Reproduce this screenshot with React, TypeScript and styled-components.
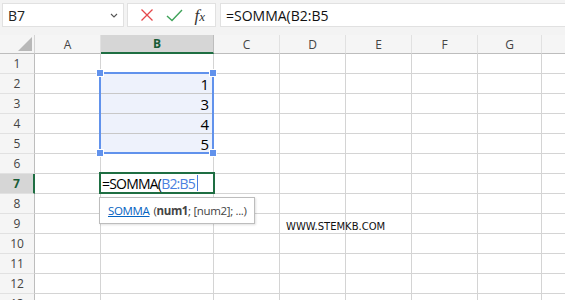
import styled, { createGlobalStyle } from 'styled-components'

const GlobalStyle = createGlobalStyle`
  html, body {
    margin: 0;
    padding: 0;
    background: #ffffff;
    font-family: "Open Sans", "Noto Sans", sans-serif;
  }
`

const COLS = ['A', 'B', 'C', 'D', 'E', 'F', 'G', 'H']
const WIDTHS = [66, 113, 66, 66, 66, 66, 64, 90]
const ROWS = 13

const cellValues: Record<string, string> = {
  B2: '1',
  B3: '3',
  B4: '4',
  B5: '5',
}

const Page = styled.div`
  width: 565px;
  height: 300px;
  overflow: hidden;
  background: #f3f3f3;
`

const Toolbar = styled.div`
  display: flex;
  align-items: flex-start;
  gap: 3px;
  height: 35px;
  padding: 3px 0 0 2px;
  box-sizing: border-box;
`

const NameBox = styled.div`
  display: flex;
  align-items: center;
  justify-content: space-between;
  width: 122px;
  height: 24px;
  box-sizing: border-box;
  padding: 0 5px 0 5px;
  background: #fff;
  border: 1px solid #e1e1e1;
  font-size: 14px;
  color: #222;
`

const ButtonBox = styled.div`
  display: flex;
  align-items: center;
  justify-content: space-around;
  width: 89px;
  height: 24px;
  box-sizing: border-box;
  padding: 0 4px 0 6px;
  background: #fff;
  border: 1px solid #e1e1e1;
`

const FxLabel = styled.span`
  font-family: "Liberation Serif", serif;
  font-style: italic;
  font-size: 17px;
  color: #333;
  line-height: 1;
`

const FxSub = styled.span`
  font-size: 13px;
`

const FormulaInput = styled.div`
  flex: 1;
  height: 24px;
  box-sizing: border-box;
  margin-left: 1px;
  padding: 0 5px;
  display: flex;
  align-items: center;
  background: #fff;
  border: 1px solid #e1e1e1;
  border-right: none;
  font-size: 14px;
  color: #111;
`

const Sheet = styled.div`
  position: relative;
  background: #fff;
  overflow: hidden;
  height: 265px;
`

const Row = styled.div`
  display: flex;
`

const Corner = styled.div`
  width: 35px;
  flex-shrink: 0;
  height: 19px;
  box-sizing: border-box;
  background: #f5f5f5;
  border-right: 1px solid #d4d4d4;
  border-bottom: 1px solid #bdbdbd;
  position: relative;
  &::after {
    content: '';
    position: absolute;
    right: 2px;
    bottom: 2px;
    border-left: 14px solid transparent;
    border-bottom: 14px solid #b8b8b8;
  }
`

const ColHeader = styled.div<{ $w: number; $active?: boolean }>`
  width: ${(p) => p.$w}px;
  flex-shrink: 0;
  height: 19px;
  box-sizing: border-box;
  display: flex;
  align-items: center;
  justify-content: center;
  font-size: 12px;
  background: ${(p) => (p.$active ? '#d6d6d6' : '#f5f5f5')};
  color: ${(p) => (p.$active ? '#185c37' : '#444')};
  font-weight: ${(p) => (p.$active ? 700 : 400)};
  border-right: 1px solid ${(p) => (p.$active ? '#bdbdbd' : '#e1e1e1')};
  border-bottom: ${(p) => (p.$active ? '2px solid #1e6e42' : '1px solid #bdbdbd')};
`

const RowHeader = styled.div<{ $active?: boolean }>`
  width: 35px;
  flex-shrink: 0;
  height: 20px;
  box-sizing: border-box;
  display: flex;
  align-items: center;
  justify-content: center;
  font-size: 12px;
  background: ${(p) => (p.$active ? '#d6d6d6' : '#f5f5f5')};
  color: ${(p) => (p.$active ? '#185c37' : '#444')};
  font-weight: ${(p) => (p.$active ? 700 : 400)};
  border-right: ${(p) => (p.$active ? '2px solid #1e6e42' : '1px solid #bdbdbd')};
  border-bottom: 1px solid #e1e1e1;
`

const Cell = styled.div<{ $w: number; $sel?: boolean }>`
  width: ${(p) => p.$w}px;
  flex-shrink: 0;
  height: 20px;
  box-sizing: border-box;
  padding: 0 4px;
  display: flex;
  align-items: center;
  justify-content: flex-end;
  background: ${(p) => (p.$sel ? '#eef2fc' : '#fff')};
  border-right: 1px solid #d4d4d4;
  border-bottom: 1px solid ${(p) => (p.$sel ? '#c8c8c8' : '#d4d4d4')};
  font-size: 15px;
  color: #000;
  white-space: nowrap;
`

const Range = styled.div`
  position: absolute;
  left: 99px;
  top: 37px;
  width: 115px;
  height: 82px;
  box-sizing: border-box;
  border: 2px solid #6192ec;
  pointer-events: none;
`

const Handle = styled.div<{ $x: 'l' | 'r'; $y: 't' | 'b' }>`
  position: absolute;
  width: 6px;
  height: 6px;
  background: #6192ec;
  border: 1px solid #fff;
  ${(p) => (p.$x === 'l' ? 'left: -5px;' : 'right: -5px;')}
  ${(p) => (p.$y === 't' ? 'top: -5px;' : 'bottom: -5px;')}
`

const ActiveCell = styled.div`
  position: absolute;
  left: 99px;
  top: 137px;
  width: 116px;
  height: 22px;
  box-sizing: border-box;
  border: 2px solid #1e6e42;
  background: #fff;
  display: flex;
  align-items: center;
  padding-left: 1px;
  font-size: 14px;
  letter-spacing: -0.8px;
  color: #000;
  white-space: nowrap;
`

const RefText = styled.span`
  color: #4a7fe0;
`

const Caret = styled.span`
  display: inline-block;
  width: 1px;
  height: 16px;
  margin-left: 2px;
  background: #4a7fe0;
`

const Tooltip = styled.div`
  position: absolute;
  left: 99px;
  top: 162px;
  width: 156px;
  height: 27px;
  box-sizing: border-box;
  padding: 0 8px;
  display: flex;
  align-items: center;
  background: #fff;
  border: 1px solid #bdbdbd;
  box-shadow: 1px 1px 2px rgba(0, 0, 0, 0.12);
  font-size: 11.5px;
  letter-spacing: -0.35px;
  color: #444;
  white-space: nowrap;
`

const FnLink = styled.span`
  color: #0563c1;
  text-decoration: underline;
  margin-right: 4px;
`

const Watermark = styled.div`
  position: absolute;
  left: 286px;
  top: 186px;
  font-family: "DejaVu Sans", sans-serif;
  font-size: 10px;
  color: #111;
  white-space: nowrap;
`

export default function App() {
  const rows = Array.from({ length: ROWS }, (_, i) => i + 1)
  return (
    <Page>
      <GlobalStyle />
      <Toolbar>
        <NameBox>
          <span>B7</span>
          <svg width="8" height="5" viewBox="0 0 8 5">
            <path d="M1 1 L4 4 L7 1" stroke="#555" strokeWidth="1.1" fill="none" />
          </svg>
        </NameBox>
        <ButtonBox>
          <svg width="14" height="14" viewBox="0 0 14 14">
            <path d="M1.5 1.5 L12.5 12.5 M12.5 1.5 L1.5 12.5" stroke="#e5474b" strokeWidth="1.3" fill="none" />
          </svg>
          <svg width="17" height="13" viewBox="0 0 17 13">
            <path d="M1 7 L6 11.5 L16 1" stroke="#3fa35a" strokeWidth="1.4" fill="none" />
          </svg>
          <FxLabel>
            f<FxSub>x</FxSub>
          </FxLabel>
        </ButtonBox>
        <FormulaInput>=SOMMA(B2:B5</FormulaInput>
      </Toolbar>
      <Sheet>
        <Row>
          <Corner />
          {COLS.map((c, i) => (
            <ColHeader key={c} $w={WIDTHS[i]} $active={c === 'B'}>
              {c}
            </ColHeader>
          ))}
        </Row>
        {rows.map((r) => (
          <Row key={r}>
            <RowHeader $active={r === 7}>{r}</RowHeader>
            {COLS.map((c, i) => {
              const id = `${c}${r}`
              const sel = c === 'B' && r >= 2 && r <= 5
              return (
                <Cell key={id} $w={WIDTHS[i]} $sel={sel}>
                  {cellValues[id]}
                </Cell>
              )
            })}
          </Row>
        ))}
        <Range>
          <Handle $x="l" $y="t" />
          <Handle $x="r" $y="t" />
          <Handle $x="l" $y="b" />
          <Handle $x="r" $y="b" />
        </Range>
        <ActiveCell>
          =SOMMA(<RefText>B2:B5</RefText>
          <Caret />
        </ActiveCell>
        <Tooltip>
          <FnLink>SOMMA</FnLink>
          (<b>num1</b>; [num2]; ...)
        </Tooltip>
        <Watermark>WWW.STEMKB.COM</Watermark>
      </Sheet>
    </Page>
  )
}
